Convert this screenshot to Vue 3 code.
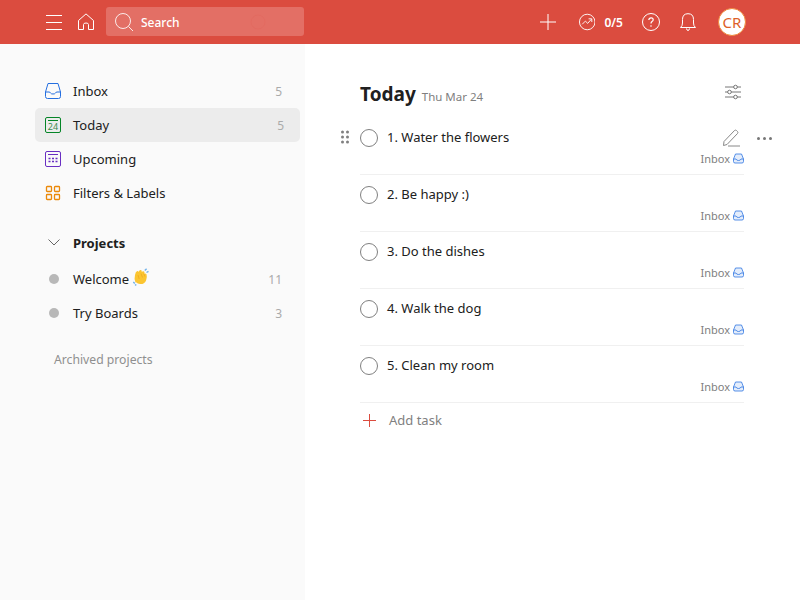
<script setup>
const tasks = [
  "1. Water the flowers",
  "2. Be happy :)",
  "3. Do the dishes",
  "4. Walk the dog",
  "5. Clean my room",
];
</script>

<template>
  <div class="app">
    <header class="topbar">
      <div class="top-left">
        <svg class="ico menu" width="16" height="16" viewBox="0 0 16 16" fill="none" stroke="#fff">
          <path d="M0 1.500h16M0 8.500h16M0 15.500h16" />
        </svg>
        <svg class="ico home" width="18" height="18" viewBox="0 0 18 18" fill="none" stroke="#fff">
          <path d="M1.500 16.500V7.500L9 .9l7.500 6.600v9h-5v-5q0-1.500-2.500-1.500T6.500 11.500v5z" />
        </svg>
        <div class="search">
          <svg width="20" height="20" viewBox="0 0 20 20" fill="none" stroke="#fff" stroke-opacity=".85">
            <circle cx="9" cy="9" r="7.500" />
            <path d="M14.500 14.500l4.500 4.500" />
          </svg>
          <span>Search</span>
          <svg class="hint" width="16" height="16" viewBox="0 0 16 16" fill="none" stroke="#db4c3f" stroke-opacity=".12">
            <circle cx="8" cy="8" r="7" />
          </svg>
        </div>
      </div>
      <div class="top-right">
        <svg class="plus" width="16" height="16" viewBox="0 0 16 16" fill="none" stroke="#fff">
          <path d="M8 0v16M0 8h16" />
        </svg>
        <div class="karma">
          <svg width="18" height="18" viewBox="0 0 18 18" fill="none" stroke="#fff">
            <circle cx="9" cy="9" r="8.500" />
            <path d="M3.500 11.500l3.500-3.500 2.500 2.500 4-4.500M10.500 5.500h3.500v3.500" />
          </svg>
          <span>0/5</span>
        </div>
        <svg class="help" width="18" height="18" viewBox="0 0 18 18" fill="none" stroke="#fff">
          <circle cx="9" cy="9" r="8.500" />
          <path d="M6.800 7q.2-2.200 2.300-2.200 2.100 0 2.100 1.900 0 1.100-1.200 1.800Q9 9.200 9 10.500" stroke-width="1.200" />
          <circle cx="9" cy="13" r=".8" fill="#fff" stroke="none" />
        </svg>
        <svg class="bell" width="16" height="19" viewBox="0 0 16 19" fill="none" stroke="#fff">
          <path d="M.5 14.500q2-1.500 2-4.500V6.500Q2.500 .7 8 .7t5.500 5.800V10q0 3 2 4.500z" />
          <path d="M6.500 15.500q.3 2 1.500 2t1.500-2" />
        </svg>
        <div class="avatar">CR</div>
      </div>
    </header>

    <div class="body">
      <aside class="sidebar">
        <nav class="nav">
          <div class="nav-item">
            <span class="nav-icon">
              <svg width="16" height="16" viewBox="0 0 16 16" fill="none" stroke="#246fe0">
                <path d="M3 .5h10L15.500 9v4.500a2 2 0 0 1-2 2h-11a2 2 0 0 1-2-2V9z" />
                <path d="M.5 9h3.500q1 0 1.500 1t2.500 1 2.500-1 1.500-1h3.500" />
              </svg>
            </span>
            <span class="nav-label">Inbox</span>
            <span class="count">5</span>
          </div>
          <div class="nav-item active">
            <span class="nav-icon">
              <svg width="16" height="16" viewBox="0 0 16 16" fill="none" stroke="#058527">
                <rect x=".5" y=".5" width="15" height="15" rx="1.500" />
                <path d="M3 3.500h10" />
                <text x="8" y="13" text-anchor="middle" font-size="9" fill="#3c8a50" stroke="none" font-family="Noto Sans, sans-serif">24</text>
              </svg>
            </span>
            <span class="nav-label">Today</span>
            <span class="count">5</span>
          </div>
          <div class="nav-item">
            <span class="nav-icon">
              <svg width="16" height="16" viewBox="0 0 16 16" fill="none" stroke="#692fc2">
                <rect x=".5" y=".5" width="15" height="15" rx="1.500" />
                <path d="M3 3.500h10" />
                <path d="M3.500 7.500h2M7 7.500h2M10.500 7.500h2M3.500 10.500h2M7 10.500h2M10.500 10.500h2" stroke-width="1.600" />
              </svg>
            </span>
            <span class="nav-label">Upcoming</span>
          </div>
          <div class="nav-item">
            <span class="nav-icon">
              <svg width="16" height="16" viewBox="0 0 16 16" fill="none" stroke="#eb8909" stroke-width="1.300">
                <rect x="1.500" y="1.500" width="5" height="5" rx=".8" />
                <rect x="9.500" y="1.500" width="5" height="5" rx=".8" />
                <rect x="1.500" y="9.500" width="5" height="5" rx=".8" />
                <rect x="9.500" y="9.500" width="5" height="5" rx=".8" />
              </svg>
            </span>
            <span class="nav-label">Filters &amp; Labels</span>
          </div>
        </nav>

        <div class="projects-head">
          <span class="nav-icon">
            <svg class="chevron" width="12" height="7" viewBox="0 0 12 7" fill="none" stroke="#666">
              <path d="M.5 .5L6 6 11.500 .5" />
            </svg>
          </span>
          <span class="projects-title">Projects</span>
        </div>

        <div class="nav-item">
          <span class="nav-icon"><i class="dot"></i></span>
          <span class="nav-label">Welcome</span>
          <svg class="clap" width="16" height="18" viewBox="0 0 16 18">
            <path d="M2.500 14.500Q.9 11 2 7q.5-3.500 2.300-4 1-.2 1.200 1 1-2.500 2.500-2 .8.300.7 1.700 1.500-1 2.400-.2.800.7.200 2.200 1.600-.4 2.200.6 1 3.200-.5 6.400-2 3.800-6 3.300-2.600-.4-3.500-1.500z" fill="#fbc531" />
            <path d="M5 7l1.200 4M8 5.500l1.500 4M10.800 5.500l1 3" stroke="#eda81f" stroke-width=".8" fill="none" />
            <path d="M11.800 2.500l1.800-1.800M13.500 4.500l2-1.200" stroke="#6fb1ea" stroke-width="1.400" fill="none" />
            <path d="M.3 14l1.500 1.500M2 16.500l1.300.9" stroke="#6fb1ea" stroke-width="1.400" fill="none" />
          </svg>
          <span class="count">11</span>
        </div>
        <div class="nav-item">
          <span class="nav-icon"><i class="dot"></i></span>
          <span class="nav-label">Try Boards</span>
          <span class="count">3</span>
        </div>

        <div class="archived">Archived projects</div>
      </aside>

      <main class="main">
        <div class="title-row">
          <h1>Today</h1>
          <span class="date">Thu Mar 24</span>
          <svg class="tune" width="18" height="16" viewBox="0 0 18 16" fill="none" stroke="#777">
            <path d="M1 3h9M13 3h4M1 8h3M7 8h10M1 13h9M13 13h4" />
            <circle cx="11.500" cy="3" r="1.800" />
            <circle cx="5.500" cy="8" r="1.800" />
            <circle cx="11.500" cy="13" r="1.800" />
          </svg>
        </div>

        <ul class="tasks">
          <li v-for="(task, i) in tasks" :key="task" class="task">
            <template v-if="i === 0">
              <svg class="drag" width="8" height="14" viewBox="0 0 8 14" fill="#808080">
                <circle v-for="c in [[1.500,2],[6.500,2],[1.500,7],[6.500,7],[1.500,12],[6.500,12]]" :key="c.join()" :cx="c[0]" :cy="c[1]" r="1.500" />
              </svg>
              <svg class="pen" width="19" height="18" viewBox="0 0 19 18" fill="none" stroke="#888">
                <path d="M2 12.500L12.500 1.500q1-.8 2 0l1 1q.8 1 0 2L5 15.500l-3.500 1z" />
                <path d="M6 17h12" />
              </svg>
              <svg class="more" width="15" height="3" viewBox="0 0 15 3" fill="#777">
                <circle cx="1.500" cy="1.500" r="1.500" />
                <circle cx="7.500" cy="1.500" r="1.500" />
                <circle cx="13.500" cy="1.500" r="1.500" />
              </svg>
            </template>
            <div class="task-main">
              <span class="check"></span>
              <span class="task-text">{{ task }}</span>
            </div>
            <div class="task-meta">
              <span>Inbox</span>
              <svg width="11" height="11" viewBox="0 0 11 11" fill="none" stroke="#246fe0" stroke-opacity=".75">
                <path d="M2.500 1h6L10.500 6v2.500a1.500 1.500 0 0 1-1.500 1.500H2A1.500 1.500 0 0 1 .5 8.500V6z" fill="#246fe0" fill-opacity=".12" />
                <path d="M.5 6h2.500q.5 1.500 2.500 1.500T8 6h2.500" />
              </svg>
            </div>
          </li>
        </ul>

        <div class="add-task">
          <svg width="13" height="13" viewBox="0 0 13 13" fill="none" stroke="#db4c3f">
            <path d="M6.500 0v13M0 6.500h13" />
          </svg>
          <span>Add task</span>
        </div>
      </main>
    </div>
  </div>
</template>

<style>
html, body {
  margin: 0;
  background: #fff;
}
</style>

<style scoped>
.app {
  width: 800px;
  height: 600px;
  overflow: hidden;
  display: flex;
  flex-direction: column;
  font-family: "Noto Sans", "Open Sans", sans-serif;
  font-size: 13px;
  color: #202020;
}

.topbar {
  height: 44px;
  flex: none;
  background: #db4c3f;
  display: flex;
  align-items: center;
  justify-content: space-between;
  padding: 0 54px 0 46px;
}
.top-left, .top-right {
  display: flex;
  align-items: center;
}
.menu {
  margin-right: 16px;
}
.home {
  margin-right: 11px;
  margin-left: -1px;
}
.search {
  width: 198px;
  height: 29px;
  box-sizing: border-box;
  margin-top: -1px;
  padding-left: 8px;
  background: #e36f65;
  border-radius: 3px;
  display: flex;
  align-items: center;
  color: #fff;
  font-size: 12px;
  font-weight: 500;
}
.search span {
  margin: 1px 0 0 7px;
}
.hint {
  margin-left: auto;
  margin-right: 38px;
}
.plus {
  margin-right: 23px;
}
.karma {
  display: flex;
  align-items: center;
  gap: 9px;
  margin-right: 19px;
  color: #fff;
  font-size: 12px;
  font-weight: 600;
  width: 44px;
}
.help {
  margin-right: 20px;
}
.bell {
  margin-right: 22px;
}
.avatar {
  width: 28px;
  height: 28px;
  box-sizing: border-box;
  border-radius: 50%;
  background: #fff;
  border: 1.5px solid #f08a3c;
  color: #dd5f2a;
  font-size: 15px;
  display: flex;
  align-items: center;
  justify-content: center;
}

.body {
  flex: 1;
  display: flex;
  min-height: 0;
}
.sidebar {
  width: 305px;
  flex: none;
  box-sizing: border-box;
  background: #fafafa;
  padding: 30px 5px 0 35px;
}
.nav {
  margin-bottom: 16px;
}
.nav-item, .projects-head {
  height: 34px;
  display: flex;
  align-items: center;
  border-radius: 5px;
  padding: 0 18px 0 10px;
}
.nav-item.active {
  background: #ececec;
}
.nav-item.active .count {
  margin-right: -2px;
}
.nav-icon {
  width: 16px;
  margin-right: 12px;
  display: flex;
  align-items: center;
  justify-content: center;
  flex: none;
}
.chevron {
  margin: -2px 0 0 2px;
}
.nav-label {
  white-space: nowrap;
}
.count {
  margin-left: auto;
  color: #aaa;
  font-size: 12px;
}
.projects-head {
  margin-bottom: 2px;
}
.projects-title {
  font-weight: 700;
}
.dot {
  width: 10px;
  height: 10px;
  border-radius: 50%;
  background: #b8b8b8;
  margin-left: 2px;
}
.clap {
  margin: -5px 0 0 4px;
}
.archived {
  margin: 21px 0 0 19px;
  font-size: 12.2px;
  color: #8f8f8f;
}

.main {
  flex: 1;
  box-sizing: border-box;
  padding: 34px 56px 0 55px;
}
.title-row {
  height: 32px;
  display: flex;
  align-items: center;
  margin-bottom: 8px;
}
h1 {
  margin: 0;
  font-size: 19px;
  line-height: 32px;
  font-weight: 700;
}
.date {
  margin: 5px 0 0 6px;
  font-size: 11.5px;
  color: #808080;
}
.tune {
  margin-left: auto;
  margin-right: 2px;
  margin-top: -5px;
}
.tasks {
  list-style: none;
  margin: 0;
  padding: 0;
}
.task {
  position: relative;
  height: 57px;
  box-sizing: border-box;
  border-bottom: 1px solid #f0f0f0;
}
.task-main {
  display: flex;
  align-items: center;
  height: 40px;
}
.task-text {
  margin-top: -2px;
}
.check {
  width: 18px;
  height: 18px;
  box-sizing: border-box;
  border: 1px solid #808080;
  border-radius: 50%;
  margin-right: 9px;
  flex: none;
}
.task-meta {
  display: flex;
  justify-content: flex-end;
  align-items: center;
  gap: 3px;
  margin-top: -7px;
  font-size: 11px;
  color: #808080;
}
.drag {
  position: absolute;
  left: -19px;
  top: 12px;
}
.pen {
  position: absolute;
  right: 3px;
  top: 11px;
}
.more {
  position: absolute;
  right: -28px;
  top: 19px;
}
.add-task {
  display: flex;
  align-items: center;
  height: 34px;
  margin: 0 0 0 3px;
  color: #808080;
}
.add-task span {
  margin-left: 13px;
}
</style>
